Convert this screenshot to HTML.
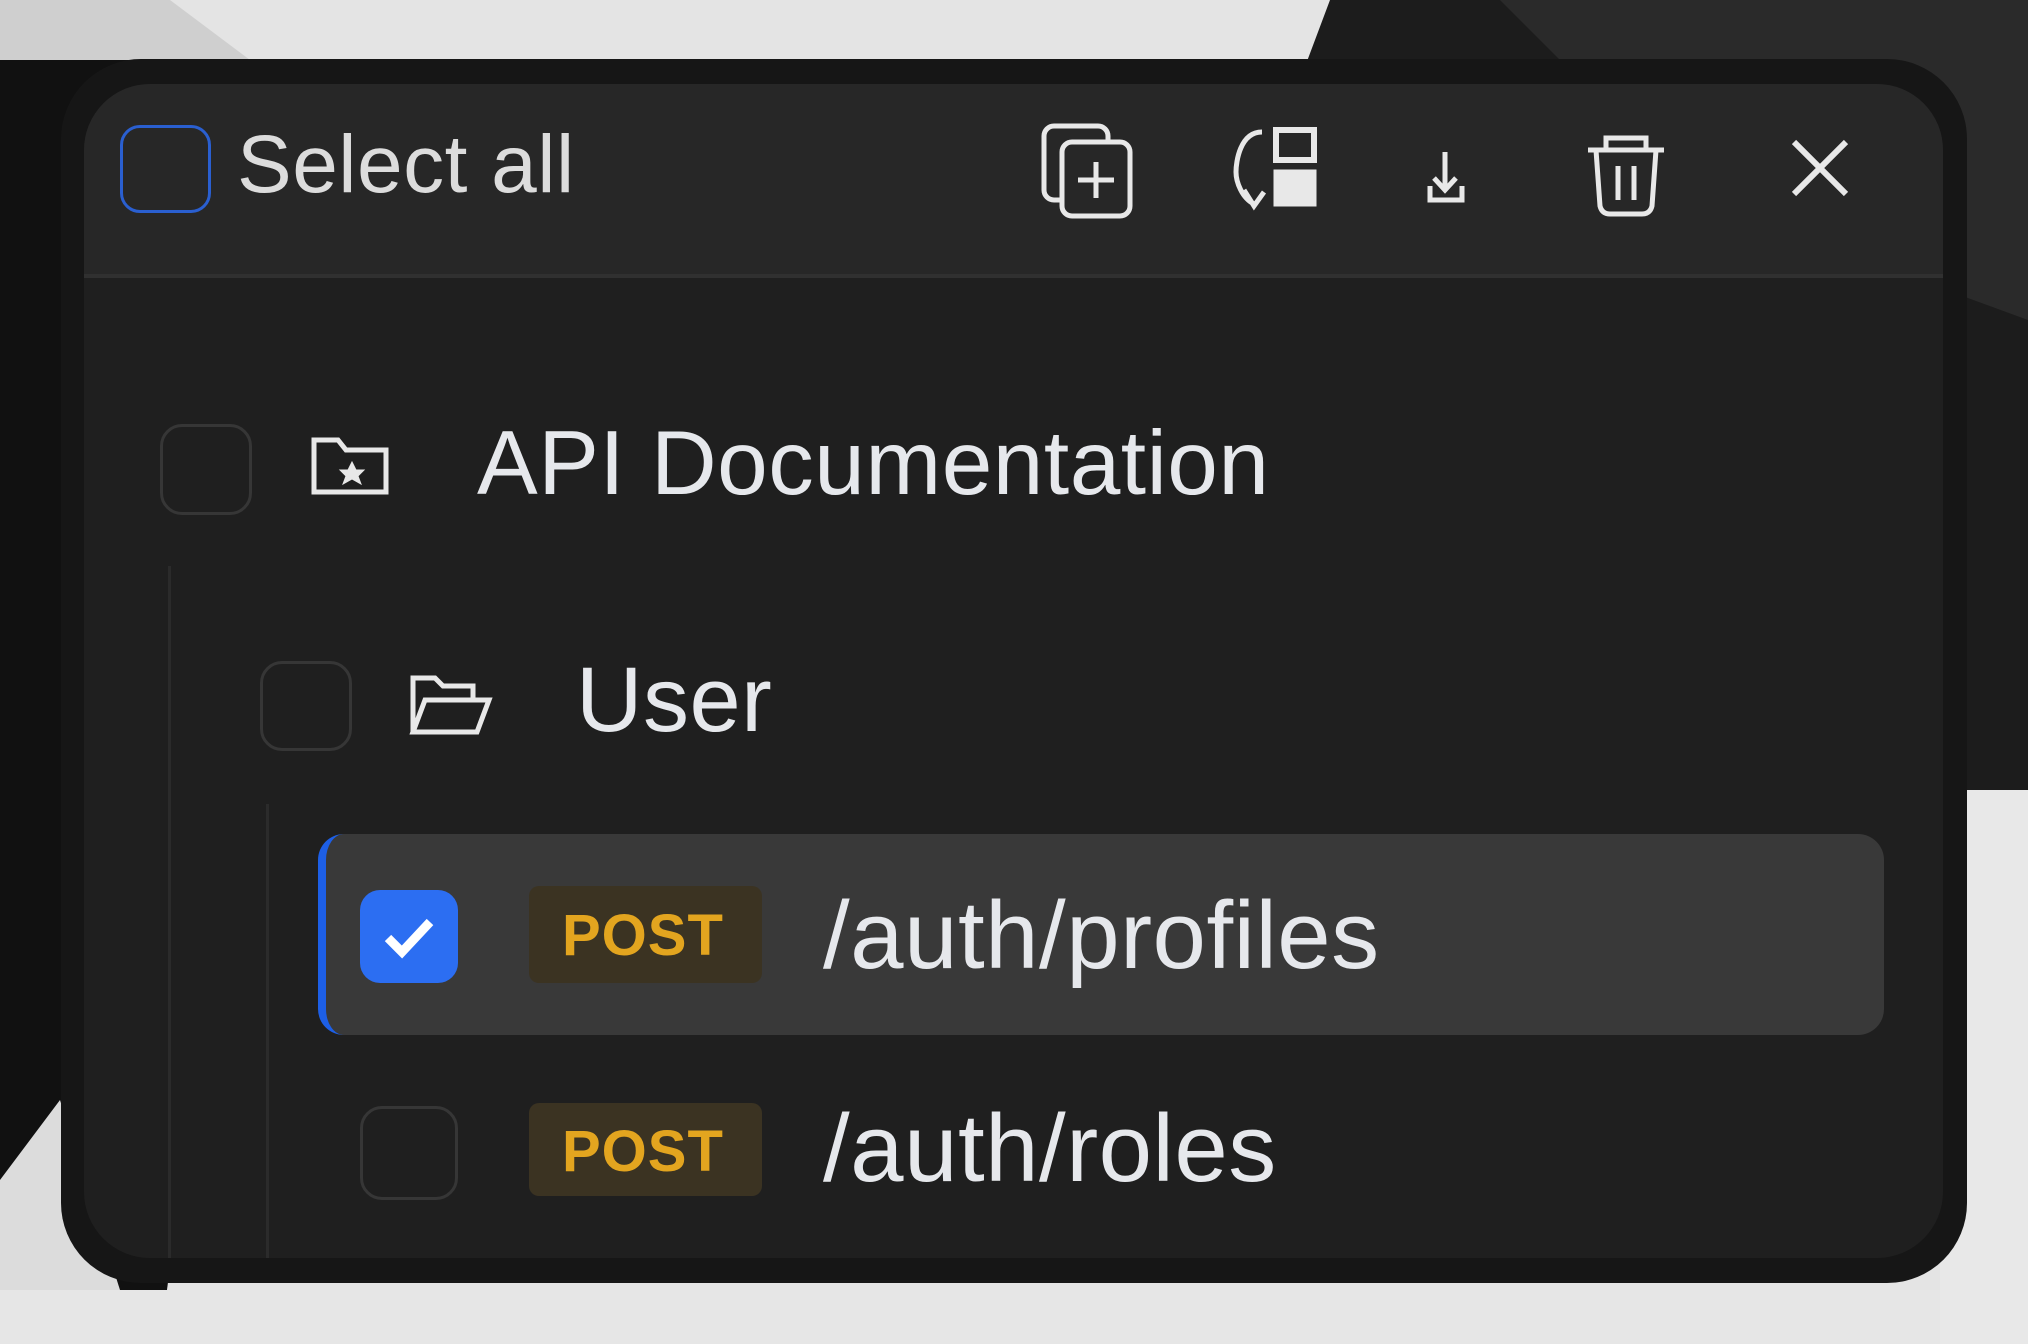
<!DOCTYPE html>
<html><head><meta charset="utf-8"><style>
*{margin:0;padding:0;box-sizing:border-box}
body{width:2028px;height:1344px;overflow:hidden;position:relative;background:#e4e4e4;font-family:"Liberation Sans",sans-serif}
.a{position:absolute}
.t{position:absolute;color:#e6e8ec;line-height:1;white-space:nowrap;letter-spacing:0.5px}
.cb{position:absolute;border:3px solid #363636;border-radius:22px}
.badge{position:absolute;background:#3b3322;border-radius:10px;color:#e3a51f;font-weight:bold;font-size:58px;line-height:1;letter-spacing:1px}
</style></head><body>
<svg class="a" style="left:0;top:0" width="2028" height="1344">
<polygon points="0,40 150,40 300,260 160,1344 0,1344" fill="#111"/>
<polygon points="0,0 170,0 250,60 0,60" fill="#cfcfcf"/>
<polygon points="1330,0 2028,0 2028,790 1900,790 1700,400 1300,80" fill="#1c1c1c"/>
<polygon points="1500,0 2028,0 2028,320 1700,200" fill="#2a2a2a"/>
<rect x="0" y="1290" width="2028" height="54" fill="#e6e6e6"/>
<rect x="1940" y="790" width="88" height="554" fill="#e8e8e8"/>
<polygon points="0,1180 60,1100 120,1290 0,1290" fill="#dcdcdc"/>
</svg>
<div class="a" style="left:61px;top:59px;width:1906px;height:1224px;background:#161616;border-radius:80px"></div>
<div class="a" style="left:84px;top:84px;width:1859px;height:1174px;background:#1f1f1f;border-radius:66px;overflow:hidden">
  <div class="a" style="left:0;top:0;width:1859px;height:194px;background:#272727;border-bottom:4px solid #303030"></div>
</div>
<div class="a" style="left:120px;top:125px;width:91px;height:88px;border:3px solid #2a5fd0;border-radius:20px"></div>
<div class="t" style="left:237px;top:124px;font-size:82px;color:#dcdcdc">Select all</div>
<svg class="a" style="left:1040px;top:120px" width="840" height="100" fill="none" stroke="#e8e8e8" stroke-width="5">
  <rect x="4" y="6" width="64" height="74" rx="10"/>
  <rect x="22" y="22" width="68" height="74" rx="10" fill="#272727"/>
  <path d="M56 42v36M38 60h36"/>
  <path d="M222 12c-22 0-26 30-26 40s6 26 18 32M204 70l10 16l10-14"/>
  <rect x="236" y="10" width="38" height="30" stroke-width="6"/>
  <rect x="236" y="52" width="38" height="32" fill="#e8e8e8"/>
  <path d="M405 32v38M394 58l11 12l11-12M390 66v14h32v-14"/>
  <path d="M548 30h76M566 30v-12h40v12M556 30l4 56q2 8 10 8h32q8 0 10-8l4-56M578 46v34M594 46v34"/>
  <path d="M754 22l52 52M806 22l-52 52" stroke-width="6"/>
</svg>
<div class="a" style="left:168px;top:566px;width:3px;height:692px;background:#2b2b2b"></div>
<div class="a" style="left:266px;top:804px;width:3px;height:454px;background:#2b2b2b"></div>
<div class="cb" style="left:160px;top:424px;width:92px;height:91px"></div>
<svg class="a" style="left:308px;top:434px" width="84" height="64" fill="none" stroke="#e8e8e8" stroke-width="5">
  <path d="M6 6h24l8 10h40v42h-72z"/><path d="M44 28l4 8h8l-6 6l3 8l-9-5l-9 5l3-8l-6-6h8z" fill="#e8e8e8" stroke-width="1"/>
</svg>
<div class="t" style="left:477px;top:418px;font-size:91px">API Documentation</div>
<div class="cb" style="left:260px;top:661px;width:92px;height:90px"></div>
<svg class="a" style="left:407px;top:670px" width="86" height="70" fill="none" stroke="#e8e8e8" stroke-width="5">
  <path d="M6 62v-54h22l8 8h30v14M6 62l12-32h64l-12 32z"/>
</svg>
<div class="t" style="left:576px;top:654px;font-size:92px">User</div>
<div class="a" style="left:318px;top:834px;width:1566px;height:201px;background:#393939;border-radius:26px;border-left:8px solid #1d5fe6"></div>
<div class="a" style="left:360px;top:890px;width:98px;height:93px;background:#2c6ef2;border-radius:20px"></div>
<svg class="a" style="left:360px;top:890px" width="98" height="93"><path d="M28 48l14 14l28-30" fill="none" stroke="#fff" stroke-width="9"/></svg>
<div class="badge" style="left:529px;top:886px;width:233px;height:97px;padding:21px 0 0 33px">POST</div>
<div class="t" style="left:823px;top:888px;font-size:96px">/auth/profiles</div>
<div class="cb" style="left:360px;top:1106px;width:98px;height:94px"></div>
<div class="badge" style="left:529px;top:1103px;width:233px;height:93px;padding:20px 0 0 33px">POST</div>
<div class="t" style="left:823px;top:1101px;font-size:96px">/auth/roles</div>
</body></html>
